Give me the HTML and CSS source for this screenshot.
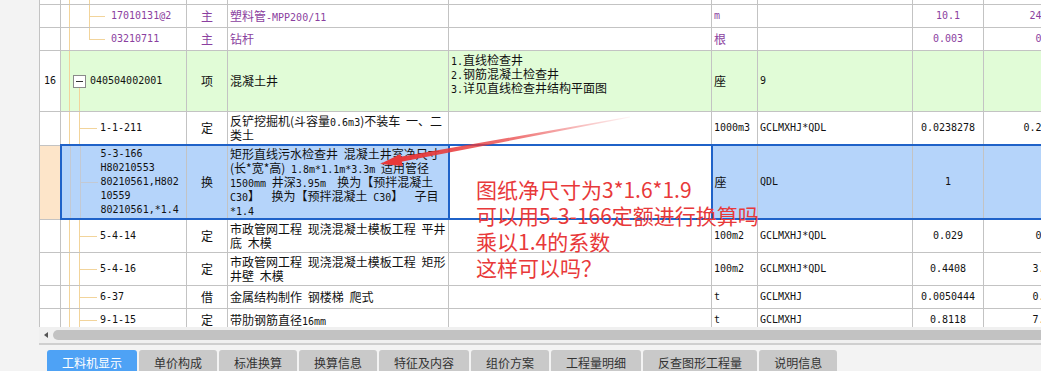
FILE: index.html
```html
<!DOCTYPE html>
<html lang="zh-CN">
<head>
    <meta charset="UTF-8">
    <title>分部分项工程量清单</title>
    <meta name="viewport" content="width=device-width, initial-scale=1.0">
    <link rel="stylesheet" href="styles.css">
</head>
<body>
<div class="page">

    <div class="grid">
        <table class="sheet">
            <colgroup>
                <col class="c-no">
                <col class="c-code">
                <col class="c-type">
                <col class="c-name">
                <col class="c-desc">
                <col class="c-unit">
                <col class="c-expr">
                <col class="c-rate">
                <col class="c-qty">
                <col class="c-more">
            </colgroup>

            <tr class="cut">
                <td class="no"></td>
                <td class="tree t-top"></td>
                <td></td><td></td><td></td><td></td><td></td><td></td><td></td><td></td>
            </tr>
            <tr class="h23 mat">
                <td class="no"></td>
                <td class="tree t-mat mono">17010131@2</td>
                <td class="type">主</td>
                <td>塑料管<span class="en">-MPP200/11</span></td>
                <td></td>
                <td class="mono">m</td>
                <td></td>
                <td class="num mono">10.1</td>
                <td class="num mono">24.2424</td>
                <td></td>
            </tr>
            <tr class="h23 mat">
                <td class="no"></td>
                <td class="tree t-mat-end mono">03210711</td>
                <td class="type">主</td>
                <td>钻杆</td>
                <td></td>
                <td>根</td>
                <td></td>
                <td class="num mono">0.003</td>
                <td class="num mono">0.027</td>
                <td></td>
            </tr>
            <tr class="h61 item">
                <td class="no mono">16</td>
                <td class="tree t-parent mono"><span class="fold"></span>040504002001</td>
                <td class="type">项</td>
                <td>混凝土井</td>
                <td class="desc"><span class="en">1.</span>直线检查井<br><span class="en">2.</span>钢筋混凝土检查井<br><span class="en">3.</span>详见直线检查井结构平面图</td>
                <td>座</td>
                <td class="mono">9</td>
                <td class="num mono"></td>
                <td class="num mono">9</td>
                <td></td>
            </tr>
            <tr class="h33">
                <td class="no"></td>
                <td class="tree t-child mono">1-1-211</td>
                <td class="type">定</td>
                <td>反铲挖掘机(斗容量<span class="en">0.6m3</span>)不装车 一、二<br>类土</td>
                <td></td>
                <td class="mono">1000m3</td>
                <td class="mono">GCLMXHJ*QDL</td>
                <td class="num mono">0.0238278</td>
                <td class="num mono">0.2144502</td>
                <td></td>
            </tr>
            <tr class="h75 sel">
                <td class="no"></td>
                <td class="tree t-child mono">5-3-166<br>H80210553<br>80210561,H802<br>10559<br>80210561,*1.4</td>
                <td class="type">换</td>
                <td>矩形直线污水检查井 混凝土井室净尺寸<br>(长*宽*高) <span class="en">1.8m*1.1m*3.3m</span> 适用管径<br><span class="en">1500mm</span> 井深<span class="en">3.95m</span>&nbsp; 换为【预拌混凝土<br><span class="en">C30</span>】&nbsp; 换为【预拌混凝土 <span class="en">C30</span>】&nbsp; 子目<br><span class="en">*1.4</span></td>
                <td class="cur"></td>
                <td>座</td>
                <td class="mono">QDL</td>
                <td class="num mono">1</td>
                <td class="num mono">9</td>
                <td></td>
            </tr>
            <tr class="h33">
                <td class="no"></td>
                <td class="tree t-child mono">5-4-14</td>
                <td class="type">定</td>
                <td>市政管网工程 现浇混凝土模板工程 平井<br>底 木模</td>
                <td></td>
                <td class="mono">100m2</td>
                <td class="mono">GCLMXHJ*QDL</td>
                <td class="num mono">0.029</td>
                <td class="num mono">0.261</td>
                <td></td>
            </tr>
            <tr class="h33">
                <td class="no"></td>
                <td class="tree t-child mono">5-4-16</td>
                <td class="type">定</td>
                <td>市政管网工程 现浇混凝土模板工程 矩形<br>井壁 木模</td>
                <td></td>
                <td class="mono">100m2</td>
                <td class="mono">GCLMXHJ*QDL</td>
                <td class="num mono">0.4408</td>
                <td class="num mono">3.9672</td>
                <td></td>
            </tr>
            <tr class="h23">
                <td class="no"></td>
                <td class="tree t-child mono">6-37</td>
                <td class="type">借</td>
                <td>金属结构制作 钢楼梯 爬式</td>
                <td></td>
                <td class="mono">t</td>
                <td class="mono">GCLMXHJ</td>
                <td class="num mono">0.0050444</td>
                <td class="num mono">0.0454</td>
                <td></td>
            </tr>
            <tr class="h23">
                <td class="no"></td>
                <td class="tree t-child mono">9-1-15</td>
                <td class="type">定</td>
                <td>带肋钢筋直径<span class="en">16mm</span></td>
                <td></td>
                <td class="mono">t</td>
                <td class="mono">GCLMXHJ</td>
                <td class="num mono">0.8118</td>
                <td class="num mono">7.3062</td>
                <td></td>
            </tr>
        </table>
    </div>

    <div class="hscroll">
        <span class="arrow"></span>
        <span class="thumb"></span>
    </div>

    <div class="tabs">
        <span class="tab active">工料机显示</span>
        <span class="tab">单价构成</span>
        <span class="tab">标准换算</span>
        <span class="tab">换算信息</span>
        <span class="tab">特征及内容</span>
        <span class="tab">组价方案</span>
        <span class="tab">工程量明细</span>
        <span class="tab">反查图形工程量</span>
        <span class="tab">说明信息</span>
    </div>

    <!-- annotation drawn over the grid -->
    <svg class="pointer" width="1041" height="371" viewBox="0 0 1041 371">
        <defs>
            <linearGradient id="fade" gradientUnits="userSpaceOnUse" x1="630" y1="117" x2="400" y2="160">
                <stop offset="0" stop-color="#e8393a" stop-opacity="0.05"/>
                <stop offset="0.5" stop-color="#e8393a" stop-opacity="0.7"/>
                <stop offset="1" stop-color="#e8393a" stop-opacity="1"/>
            </linearGradient>
        </defs>
        <polygon points="630,116.5 630,117.5 400,162 399,157" fill="url(#fade)"/>
        <polygon points="380,164 402.7,166 400.5,154" fill="#e8393a"/>
    </svg>

    <div class="note">
        图纸净尺寸为3*1.6*1.9<br>
        可以用5-3-166定额进行换算吗<br>
        乘以1.4的系数<br>
        这样可以吗？
    </div>

</div>
</body>
</html>
```

FILE: styles.css
```css
body {
    margin: 0;
    background-color: #f3f3f3;
    font-family: "Noto Sans CJK SC", sans-serif;
    font-size: 12px;
    color: #111;
    overflow: hidden;
}

.page {
    position: relative;
    height: 371px;
}

/* grid */

.grid {
    margin-left: 39px;
    height: 327px;
    overflow: hidden;
    background-color: #fff;
}

.sheet {
    border-collapse: collapse;
    table-layout: fixed;
    width: 1178px;
}

.c-no { width: 21px; }
.c-code { width: 126px; }
.c-type { width: 41px; }
.c-name { width: 221px; }
.c-desc { width: 263px; }
.c-unit { width: 46px; }
.c-expr { width: 155px; }
.c-rate { width: 71px; }
.c-qty { width: 134px; }
.c-more { width: 100px; }

.sheet td {
    border: 1px solid #c3c3c3;
    padding: 0 2px;
    line-height: 14px;
    white-space: nowrap;
    overflow: hidden;
    vertical-align: middle;
    word-spacing: 3px;
}

.sheet td.no {
    text-align: center;
    background-color: #fff;
    padding: 0;
}

.sheet td.type,
.sheet td.num {
    text-align: center;
}

.mono,
.en {
    font-family: "DejaVu Sans Mono", monospace;
    font-size: 10px;
    word-spacing: 0;
}

.en {
    line-height: 10px;
}

.cut td {
    border-top: 0;
    height: 4px;
}

.h23 td { height: 22px; }
.h33 td { height: 32px; }
.h61 td { height: 60px; }
.h75 td { height: 72px; }

.mat td {
    color: #8b3fa0;
}

.item td {
    background-color: #e1fcd7;
}

.sheet td.desc {
    vertical-align: top;
    padding-top: 2px;
    height: 58px;
}

/* tree lines */

.tree {
    --line: #f2d49b;
    padding-left: 39px;
    background-repeat: no-repeat;
}

.t-top {
    background-image: linear-gradient(var(--line), var(--line)), linear-gradient(var(--line), var(--line));
    background-size: 1px 100%, 1px 100%;
    background-position: 8px 0, 28px 0;
}

.sheet td.t-mat,
.sheet td.t-mat-end {
    padding-left: 50px;
    background-image: linear-gradient(var(--line), var(--line)), linear-gradient(var(--line), var(--line)), linear-gradient(var(--line), var(--line));
    background-size: 1px 100%, 1px 100%, 16px 1px;
    background-position: 8px 0, 28px 0, 28px 50%;
}

.sheet td.t-mat-end {
    background-size: 1px 100%, 1px 50%, 16px 1px;
}

.sheet td.t-parent {
    padding-left: 12px;
    background-image: linear-gradient(var(--line), var(--line)), linear-gradient(var(--line), var(--line));
    background-size: 1px 100%, 1px 50%;
    background-position: 8px 0, 18px 100%;
}

.sheet td.t-child {
    padding-left: 39px;
    background-image: linear-gradient(var(--line), var(--line)), linear-gradient(var(--line), var(--line)), linear-gradient(var(--line), var(--line));
    background-size: 1px 100%, 1px 100%, 18px 1px;
    background-position: 8px 0, 18px 0, 18px 50%;
}

.fold {
    display: inline-flex;
    align-items: center;
    justify-content: center;
    width: 11px;
    height: 11px;
    margin-right: 4px;
    border: 1px solid #8a8a8a;
    background-color: #fff;
    vertical-align: middle;
}

.fold::before {
    content: "";
    width: 7px;
    height: 1px;
    background-color: #333;
}

/* selected row */

.sel td {
    background-color: #b5d4fa;
    border-top: 2px solid #1f62c8;
    border-bottom: 2px solid #1f62c8;
}

.sel .tree {
    --line: #c3c9d3;
}

.sel td.no {
    background-color: #fde5c9;
    border-top: 1px solid #c3c3c3;
    border-bottom: 1px solid #c3c3c3;
    border-right: 2px solid #1f62c8;
}

.sel td.cur {
    background-color: #fff;
    border-left: 2px solid #1f62c8;
    border-right: 2px solid #1f62c8;
}

/* scroll bar */

.hscroll {
    display: flex;
    align-items: center;
    margin-left: 39px;
    height: 16px;
    background-color: #f0f0f0;
    border-bottom: 2px solid #cfcfcf;
}

.hscroll .arrow {
    width: 0;
    height: 0;
    margin-left: 5px;
    border-top: 3px solid transparent;
    border-bottom: 3px solid transparent;
    border-right: 4px solid #555;
}

.hscroll .thumb {
    flex: 1;
    height: 10px;
    margin-left: 5px;
    border-radius: 5px 0 0 5px;
    background-color: #c2c2c2;
}

/* bottom tabs */

.tabs {
    display: flex;
    gap: 2px;
    padding: 5px 0 0 47px;
}

.tab {
    padding: 0 15px;
    line-height: 26px;
    background-color: #c9c9c9;
    border-radius: 3px 3px 0 0;
    color: #333;
    white-space: nowrap;
}

.tab.active {
    background-color: #4ea2f5;
    color: #fff;
}

/* red notes over the grid */

.pointer {
    position: absolute;
    left: 0;
    top: 0;
    pointer-events: none;
}

.note {
    position: absolute;
    left: 476px;
    top: 176px;
    color: #e8393a;
    font-size: 21px;
    line-height: 26px;
    white-space: nowrap;
}
```
